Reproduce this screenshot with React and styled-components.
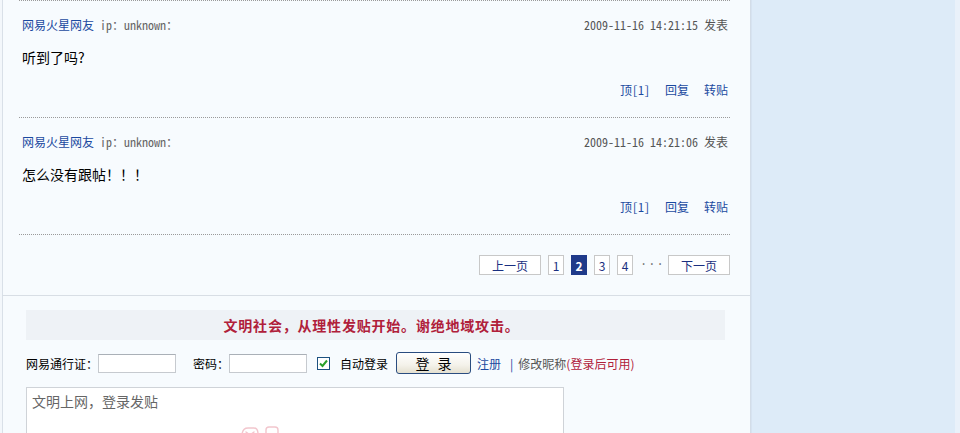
import React from "react";
import styled, { createGlobalStyle } from "styled-components";

const Global = createGlobalStyle`
  html, body { margin: 0; padding: 0; }
  body {
    background: #ddebf8;
    font-family: "Noto Sans CJK SC", "Liberation Sans", sans-serif;
    font-size: 12px;
    color: #000;
  }
  * { box-sizing: border-box; }
`;

const Page = styled.div`
  display: flex;
  height: 433px;
  overflow: hidden;
`;

const Main = styled.div`
  width: 751px;
  flex: none;
  background: #f7fbfe;
  border-left: 2px solid #f3f7fb;
  border-right: 1px solid #d3dde8;
  box-shadow: inset 1px 0 0 #d9e0e8;
`;

const Side = styled.div`
  flex: 1;
  background: #ddebf8;
  border-left: 1px solid #d6e3f1;
  border-right: 5px solid #e9f1fa;
`;

const Posts = styled.div`
  margin: 0 20px 0 17px;
`;

const Post = styled.div`
  border-top: 1px dotted #9a9a9a;
  padding: 16px 2px 19px 3px;
`;

const Meta = styled.div`
  display: flex;
  justify-content: space-between;
  align-items: center;
  height: 16px;
  line-height: 16px;
`;

const Author = styled.a`
  color: #1b4aa0;
  text-decoration: none;
  font-size: 12px;
`;

const Mono = styled.span`
  font-family: "Noto Sans Mono CJK SC", "Liberation Mono", monospace;
  font-size: 12px;
  white-space: pre;
`;

const Ip = styled.span`
  color: #666;
  margin-left: 6px;
`;

const PostTime = styled.span`
  color: #555;
  font-size: 12px;
`;

const Body = styled.div`
  margin-top: 14px;
  font-size: 14px;
  line-height: 20px;
  height: 20px;
`;

const Actions = styled.div`
  margin-top: 15px;
  display: flex;
  justify-content: flex-end;
  gap: 15px;
  height: 16px;
  line-height: 16px;
`;

const ActionLink = styled.a`
  color: #1b4aa0;
  text-decoration: none;
  font-size: 12px;
`;

const Pager = styled.div`
  border-top: 1px dotted #9a9a9a;
  padding: 20px 0 20px 0;
  display: flex;
  justify-content: flex-end;
  align-items: center;
  gap: 7px;
`;

const PageBtn = styled.span`
  display: inline-flex;
  align-items: center;
  justify-content: center;
  height: 20px;
  width: ${(p) => (p.$wide ? "62px" : "16px")};
  border: 1px solid ${(p) => (p.$active ? "#1f3a8a" : "#c8c8c8")};
  background: ${(p) => (p.$active ? "#1f3a8a" : "#fff")};
  color: ${(p) => (p.$active ? "#fff" : "#1a2f80")};
  font-weight: ${(p) => (p.$active ? "bold" : "normal")};
  font-size: 12px;
`;

const Dots = styled.span`
  color: #777;
  width: 21px;
  text-align: center;
  letter-spacing: 1px;
  font-family: "Liberation Mono", monospace;
  font-size: 12px;
`;

const Lower = styled.div`
  border-top: 1px solid #d8dee5;
  padding: 14px 0 0 24px;
`;

const Notice = styled.div`
  width: 699px;
  height: 30px;
  background: #eef2f6;
  display: flex;
  align-items: center;
  justify-content: center;
  padding-right: 8px;
  color: #b0203a;
  font-weight: bold;
  font-size: 14px;
  letter-spacing: 0.8px;
`;

const LoginRow = styled.div`
  margin-top: 12px;
  display: flex;
  align-items: center;
  height: 22px;
  font-size: 12px;
`;

const Label = styled.span`
  margin-left: ${(p) => p.$ml || 0}px;
`;

const Input = styled.input`
  width: 78px;
  height: 19px;
  border: 1px solid #c6cacf;
  border-top-color: #aab0b7;
  background: #fff;
  margin: 0;
  padding: 0 2px;
`;

const Check = styled.span`
  display: inline-flex;
  align-items: center;
  justify-content: center;
  width: 13px;
  height: 13px;
  border: 1px solid #1c5180;
  background: #fff;
  margin-left: 10px;
`;

const LoginButton = styled.button`
  margin-left: 8px;
  width: 75px;
  height: 22px;
  border: 1px solid #2a4d80;
  border-radius: 3px;
  background: linear-gradient(#ffffff, #f4f2ea 60%, #e4e0d0);
  font-family: "Noto Sans CJK SC", sans-serif;
  font-size: 14px;
  color: #000;
  word-spacing: 5px;
  padding: 0;
  line-height: 20px;
`;

const Link = styled.a`
  color: ${(p) => p.$color || "#1b4aa0"};
  text-decoration: none;
  margin-left: ${(p) => p.$ml || 0}px;
`;

const Muted = styled.span`
  color: ${(p) => p.$color || "#666"};
  margin-left: ${(p) => p.$ml || 0}px;
`;

const EditorWrap = styled.div`
  position: relative;
  margin-top: 13px;
  width: 538px;
  height: 100px;
`;

const Editor = styled.textarea`
  display: block;
  width: 100%;
  height: 100%;
  border: 1px solid #cfd3d8;
  background: #fff;
  resize: none;
  padding: 3px 5px;
  margin: 0;
  font-family: "Noto Sans CJK SC", sans-serif;
  font-size: 14px;
  line-height: 20px;
  &::placeholder { color: #666; opacity: 1; }
`;

const Watermark = styled.svg`
  position: absolute;
  left: 212px;
  top: 37px;
  pointer-events: none;
`;

const posts = [
  { time: "2009-11-16 14:21:15", body: "听到了吗?" },
  { time: "2009-11-16 14:21:06", body: "怎么没有跟帖！！！" },
];

export default function App() {
  return (
    <>
      <Global />
      <Page>
        <Main>
          <Posts>
            {posts.map((p, i) => (
              <Post key={i}>
                <Meta>
                  <span>
                    <Author href="#">网易火星网友</Author>
                    <Ip>
                      <Mono>ip：unknown：</Mono>
                    </Ip>
                  </span>
                  <PostTime>
                    <Mono>{p.time + " "}</Mono>发表
                  </PostTime>
                </Meta>
                <Body>{p.body}</Body>
                <Actions>
                  <ActionLink href="#">
                    顶<Mono>[1]</Mono>
                  </ActionLink>
                  <ActionLink href="#">回复</ActionLink>
                  <ActionLink href="#">转贴</ActionLink>
                </Actions>
              </Post>
            ))}
            <Pager>
              <PageBtn $wide>上一页</PageBtn>
              <PageBtn>1</PageBtn>
              <PageBtn $active>2</PageBtn>
              <PageBtn>3</PageBtn>
              <PageBtn>4</PageBtn>
              <Dots>···</Dots>
              <PageBtn $wide>下一页</PageBtn>
            </Pager>
          </Posts>
          <Lower>
            <Notice>文明社会，从理性发贴开始。谢绝地域攻击。</Notice>
            <LoginRow>
              <Label>网易通行证：</Label>
              <Input />
              <Label $ml={17}>密码：</Label>
              <Input type="password" />
              <Check>
                <svg width="11" height="11" viewBox="0 0 11 11">
                  <path d="M2 5.5 L4.5 8 L9 2.5" fill="none" stroke="#2aa02a" strokeWidth="2" />
                </svg>
              </Check>
              <Label $ml={10}>自动登录</Label>
              <LoginButton>登 录</LoginButton>
              <Link href="#" $ml={6}>注册</Link>
              <Muted $ml={9} $color="#1b4aa0">|</Muted>
              <Muted $ml={5} $color="#555">修改昵称</Muted>
              <Muted $color="#b0203a">(登录后可用)</Muted>
            </LoginRow>
            <EditorWrap>
              <Editor placeholder="文明上网，登录发贴" />
              <Watermark width="44" height="20" viewBox="0 0 44 20">
                <g fill="none" stroke="#f2c6cd" strokeWidth="1.4" strokeLinecap="round">
                  <path d="M4 12 Q4 4 10 4 L16 4 Q20 4 20 10 L20 20" />
                  <path d="M8 8 L16 14 M16 8 L8 14" />
                  <path d="M28 6 Q28 3 31 3 L37 3 Q40 3 40 6 L40 20 M28 6 L28 20" />
                  <path d="M28 10 L40 10" />
                </g>
              </Watermark>
            </EditorWrap>
          </Lower>
        </Main>
        <Side />
      </Page>
    </>
  );
}
